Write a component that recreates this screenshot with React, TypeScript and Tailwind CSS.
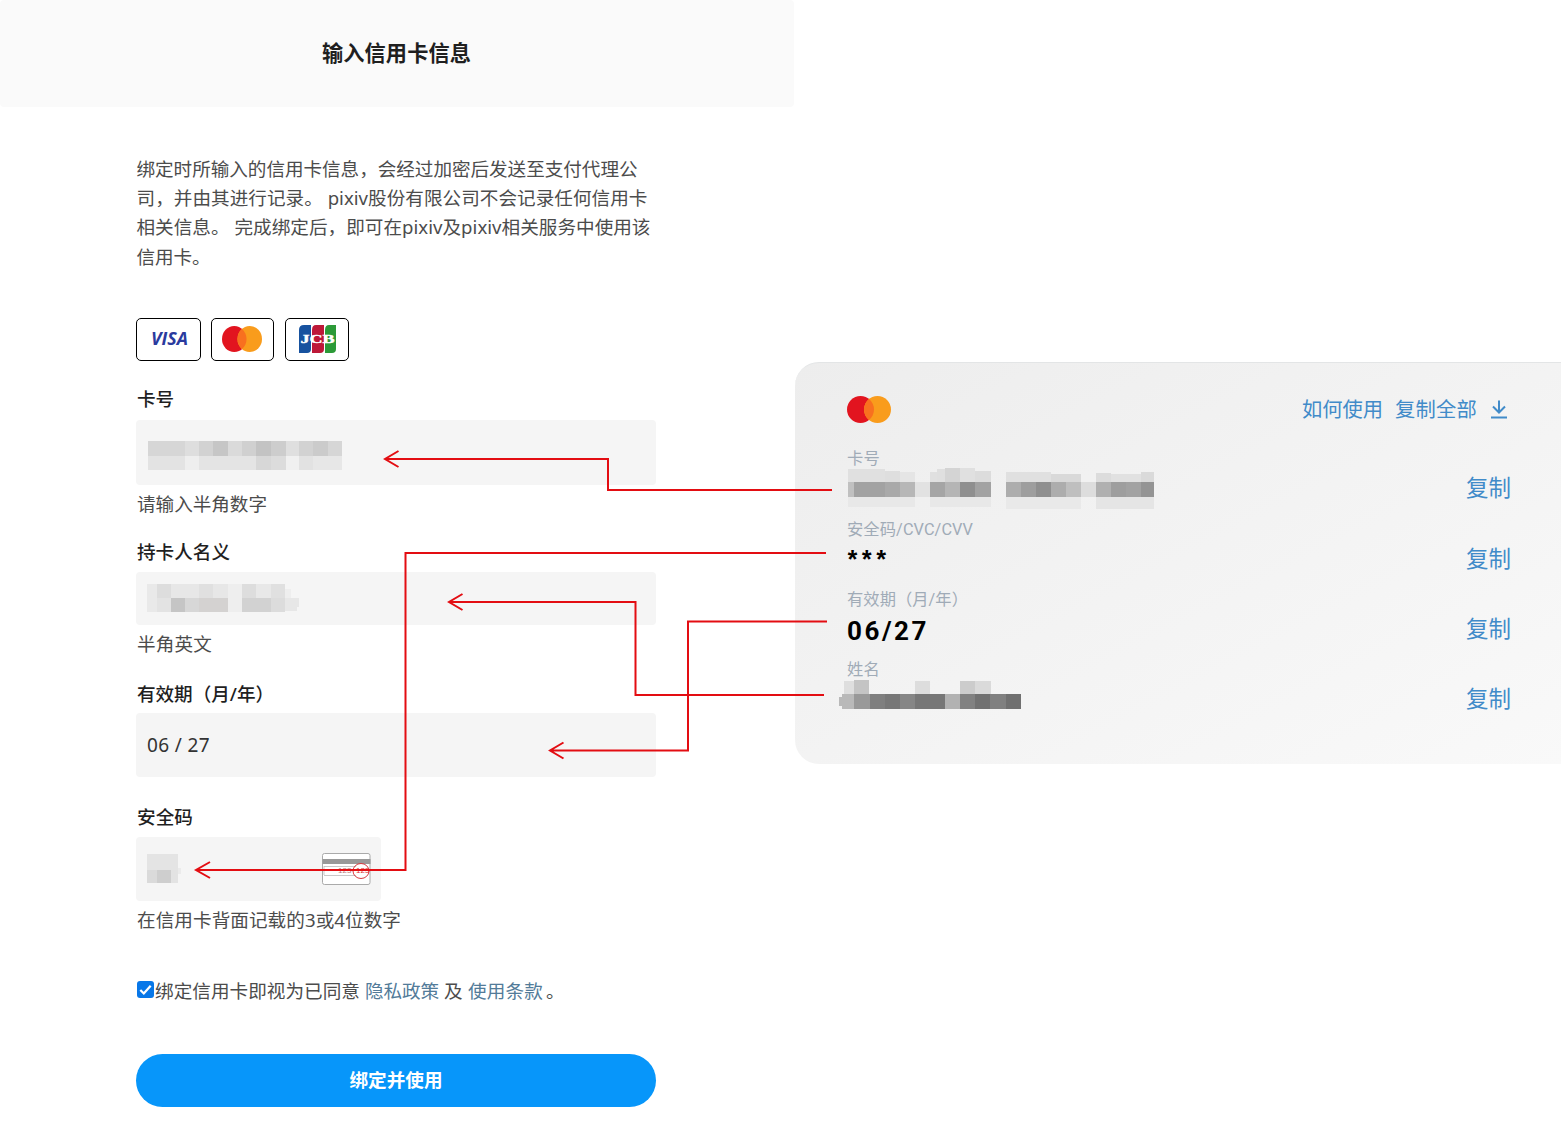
import React from "react";

const FONT = "font-['Noto_Sans','Noto_Sans_CJK_SC',sans-serif]";

function Fit({ w, size, children, className = "", weight = 400, fill, family }: {
  w: number; size: number; children: string; className?: string; weight?: number; fill?: string; family?: string;
}) {
  const ref = React.useRef<HTMLSpanElement>(null);
  const [spacing, setSpacing] = React.useState(0);
  React.useLayoutEffect(() => {
    if (!ref.current) return;
    const natural = ref.current.getBoundingClientRect().width;
    setSpacing((w - natural) / Array.from(children).length);
  }, []);
  return (
    <span ref={ref} className={`inline-block whitespace-pre ${className}`}
      style={{ fontSize: size, letterSpacing: spacing, fontWeight: weight, color: fill, fontFamily: family }}>
      {children}
    </span>
  );
}

function Mastercard({ className = "" }: { className?: string }) {
  return (
    <svg viewBox="0 0 44 27" className={className} preserveAspectRatio="none">
      <circle cx="13.5" cy="13.5" r="13.5" fill="#e2141f" />
      <circle cx="30.5" cy="13.5" r="13.5" fill="#f99c1c" />
      <path d="M22 3a13.5 13.5 0 0 1 0 21 13.5 13.5 0 0 1 0-21" fill="#f8701f" />
    </svg>
  );
}

function Visa() {
  return (
    <svg viewBox="0 0 50 30" className="h-[30px] w-[50px] overflow-visible">
      <text x="7" y="21" textLength="37" lengthAdjust="spacingAndGlyphs" fontFamily="Open Sans" fontStyle="italic" fontWeight="700" fontSize="17" fill="#2a3a9e">VISA</text>
    </svg>
  );
}

function Jcb() {
  return (
    <svg viewBox="0 0 37 29" className="h-[29px] w-[37px]">
      <path d="M5 0h7v24q0 4-4 4H0V5q0-5 5-5" fill="#17529f" />
      <path d="M17 0h8v24q0 4-4 4h-8V5q0-5 4-5" fill="#bd1838" />
      <path d="M30 0h7v24q0 4-4 4h-7V5q0-5 4-5" fill="#2c9a38" />
      <text x="1.500" y="18" textLength="34" lengthAdjust="spacingAndGlyphs" fontFamily="Liberation Serif" fontWeight="700" fontSize="12" fill="#fff" stroke="#fff" strokeWidth=".4">JCB</text>
    </svg>
  );
}

type Cell = [number, number, number, number, string];
function Mosaic({ w, h, cells, className = "" }: { w: number; h: number; cells: Cell[]; className?: string }) {
  return (
    <svg width={w} height={h} className={`block shrink-0 ${className}`} shapeRendering="crispEdges">
      {cells.map(([x, y, cw, ch, c], i) => <rect key={i} x={x} y={y} width={cw} height={ch} fill={c} />)}
    </svg>
  );
}

const numberCells: Cell[] = [
  [0, 0, 37, 15, "#d6d6d6"], [37, 0, 14, 15, "#dedede"], [51, 0, 14, 15, "#d2d2d2"], [65, 0, 15, 15, "#c6c6c6"],
  [80, 0, 14, 15, "#dadada"], [94, 0, 14, 15, "#d0d0d0"], [108, 0, 15, 15, "#c3c3c3"], [123, 0, 15, 15, "#cdcdcd"],
  [138, 0, 13, 15, "#dfdfdf"], [151, 0, 14, 15, "#d2d2d2"], [165, 0, 15, 15, "#cbcbcb"], [180, 0, 14, 15, "#d6d6d6"],
  [0, 15, 37, 14, "#e3e3e3"], [37, 15, 14, 14, "#eeeeee"], [51, 15, 57, 14, "#e4e4e4"], [108, 15, 15, 14, "#d7d7d7"],
  [123, 15, 15, 14, "#dcdcdc"], [138, 15, 13, 14, "#f0f0f0"], [151, 15, 14, 14, "#e2e2e2"], [165, 15, 29, 14, "#e7e7e7"],
];
const holderCells: Cell[] = [
  [0, 0, 10, 28, "#e9e9e9"], [10, 0, 14, 14, "#dddddd"], [24, 0, 28, 14, "#e7e7e7"], [52, 0, 14, 14, "#e0e0e0"],
  [66, 0, 15, 14, "#e7e7e7"], [81, 0, 14, 14, "#eeeeee"], [95, 0, 14, 14, "#dddddd"], [109, 0, 15, 14, "#e8e8e8"],
  [124, 0, 14, 14, "#e0e0e0"], [10, 14, 14, 14, "#e3e3e3"], [24, 14, 14, 14, "#c5c5c5"], [38, 14, 14, 14, "#d7d7d7"],
  [52, 14, 29, 14, "#d4d2d1"], [81, 14, 14, 14, "#eeeeee"], [95, 14, 29, 14, "#d2d2d2"], [124, 14, 14, 14, "#dcdcdc"],
  [138, 14, 12, 13, "#e7e7e7"], [150, 14, 2, 9, "#e7e7e7"], [138, 5, 6, 9, "#eeeeee"],
];
const codeCells: Cell[] = [
  [0, 0, 31, 16, "#e4e4e4"], [0, 16, 10, 13, "#dadada"], [10, 16, 14, 13, "#cecece"], [24, 16, 7, 13, "#e3e3e3"],
  [31, 14, 3, 6, "#ebebeb"],
];
const panelNumberCells: Cell[] = [
  [0, 1, 37, 13, "#e0e0e0"], [37, 3, 15, 11, "#dedede"], [52, 4, 15, 10, "#e5e5e5"],
  [82, 4, 15, 10, "#e0e0e0"], [89, 1, 8, 13, "#dfdfdf"], [97, 0, 15, 14, "#d4d4d4"], [112, 0, 15, 14, "#e0e0e0"], [127, 3, 16, 11, "#dcdcdc"],
  [158, 4, 45, 10, "#e0e0e0"], [203, 6, 30, 8, "#d9d9d9"], [248, 5, 15, 9, "#dcdcdc"], [263, 6, 30, 8, "#e1e1e1"], [293, 4, 13, 10, "#dadada"],
  [0, 14, 6, 15, "#c0c0c0"], [6, 14, 31, 15, "#a2a2a2"], [37, 14, 15, 15, "#a9a9a9"], [52, 14, 15, 15, "#b7b7b7"], [67, 14, 15, 15, "#e2e2e2"],
  [82, 14, 15, 15, "#a5a5a5"], [97, 14, 15, 15, "#b5b5b5"], [112, 14, 15, 15, "#8f8f8f"], [127, 14, 16, 15, "#a2a2a2"],
  [158, 14, 15, 15, "#adadad"], [173, 14, 15, 15, "#9e9e9e"], [188, 14, 15, 15, "#8f8f8f"], [203, 14, 15, 15, "#adadad"],
  [218, 14, 15, 15, "#bfbfbf"], [233, 14, 15, 15, "#dddddd"], [248, 14, 15, 15, "#b0b0b0"], [263, 14, 15, 15, "#9e9e9e"],
  [278, 14, 15, 15, "#a2a2a2"], [293, 14, 13, 15, "#949494"],
  [0, 29, 67, 10, "#e8e8e8"], [82, 29, 61, 10, "#e8e8e8"], [158, 29, 75, 12, "#e9e9e9"], [248, 29, 58, 12, "#e5e5e5"],
];
const panelNameCells: Cell[] = [
  [5, 2, 10, 14, "#dedede"], [15, 1, 15, 15, "#c4c4c4"], [76, 2, 15, 14, "#dddddd"], [121, 2, 15, 14, "#cccccc"], [136, 2, 16, 14, "#dadada"],
  [0, 18, 5, 9, "#b9b9b9"], [3, 15, 12, 15, "#b9b9b9"], [15, 15, 16, 15, "#999999"], [31, 15, 15, 15, "#7f7f7f"], [46, 15, 15, 15, "#777777"],
  [61, 15, 15, 15, "#868686"], [76, 15, 30, 15, "#777777"], [106, 15, 15, 15, "#b2b2b2"], [121, 15, 15, 15, "#818181"],
  [136, 15, 15, 15, "#717171"], [151, 15, 16, 15, "#808080"], [167, 15, 15, 15, "#707070"],
];

function Label({ children, w, className }: { children: string; w: number; className: string }) {
  return <div className={`flex items-center pl-px text-[#1f1f1f] ${className}`}><Fit w={w} size={18.6} weight={500}>{children}</Fit></div>;
}
function Helper({ children, w }: { children: string; w: number }) {
  return <div className="flex h-[37px] mb-px items-center pl-px text-[#4c4c4c]"><Fit w={w} size={18.6}>{children}</Fit></div>;
}

function CardBack() {
  return (
    <svg viewBox="0 0 50 34" className="h-[34px] w-[50px]" fill="none">
      <rect x="1.500" y="1.500" width="47.5" height="31" rx="2" fill="#fff" stroke="#aaa" />
      <rect x="1.500" y="7" width="48" height="5" fill="#999" />
      <path d="M3 14.500h32M3 23.500h32M3 14v9" stroke="#bbb" strokeWidth=".8" />
      <text x="17" y="20.500" fontSize="8" fontFamily="Liberation Sans" fill="#b77">123</text>
      <text x="35" y="20.500" fontSize="8" fontFamily="Liberation Sans" fill="#d33">123</text>
      <ellipse cx="40" cy="19" rx="8" ry="7.5" stroke="#d9393f" />
    </svg>
  );
}

function Arrows() {
  return (
    <svg className="pointer-events-none absolute left-0 top-0" width="1561" height="1126" fill="none" stroke="#e30d12" strokeWidth="2">
      <path d="M832 490H608V459H385M398.500 451L385 459L398.500 467" />
      <path d="M826 553H405.500V870H196M210 862L196 870L210 878" />
      <path d="M824 695H635.500V602H449M462.500 594L449 602L462.500 610" />
      <path d="M827 621.500H688V750.500H550M563.500 742.500L550 750.500L563.500 758.500" />
    </svg>
  );
}

function PanelRow({ label, w, children, className }: { label: string; w: number; children?: React.ReactNode; className: string }) {
  return (
    <div className={`flex justify-between ${className}`}>
      <div className="flex flex-col">
        <div className="flex h-6 items-center text-[#a0abb7]"><Fit w={w} size={16.3} family="Roboto, 'Noto Sans CJK SC', sans-serif">{label}</Fit></div>
        {children}
      </div>
      <button className="mt-[27px] flex h-7 items-center text-[#418bc9]"><Fit w={45} size={22.5}>复制</Fit></button>
    </div>
  );
}

const intro: [string, number][] = [
  ["绑定时所输入的信用卡信息，会经过加密后发送至支付代理公", 501],
  ["司，并由其进行记录。 pixiv股份有限公司不会记录任何信用卡", 511],
  ["相关信息。 完成绑定后，即可在pixiv及pixiv相关服务中使用该", 514],
  ["信用卡。", 74],
];

export default function App() {
  return (
    <main lang="zh-CN" className={`relative flex h-[1126px] w-[1561px] overflow-hidden bg-white ${FONT}`}>
      <section className="flex w-[795px] shrink-0 flex-col">
        <header className="flex h-[107px] w-[794px] items-center justify-center rounded bg-[#fafafa] pb-0.5 pr-px text-[#1f1f1f]">
          <h1 className="flex"><Fit w={149} size={21.2} weight={700}>输入信用卡信息</Fit></h1>
        </header>
        <div className="ml-[136px] flex w-[520px] flex-col">
          <div className="mt-[47px] flex flex-col pl-[0.5px] text-[#4c4c4c]">
            {intro.map(([t, w]) => (
              <div key={t} className="flex h-[29.3px] items-center"><Fit w={w} size={18.6}>{t}</Fit></div>
            ))}
          </div>
          <div className="mt-[46.8px] flex gap-[10px]">
            <div className="flex h-[43px] w-[65px] items-center justify-center rounded-[5px] border-[1.5px] border-black"><Visa /></div>
            <div className="flex h-[43px] w-[63px] items-center justify-center rounded-[5px] border border-black"><Mastercard className="mr-px h-[26px] w-10" /></div>
            <div className="ml-px flex h-[43px] w-[64px] items-center justify-center rounded-[5px] border border-black"><Jcb /></div>
          </div>
          <Label w={37} className="mb-[3px] mt-[20px] h-9">卡号</Label>
          <div className="flex h-[65px] items-center rounded bg-[#f5f5f5] pl-3 pt-1.5"><Mosaic w={194} h={29} cells={numberCells} /></div>
          <Helper w={130}>请输入半角数字</Helper>
          <Label w={93} className="mt-[9px] h-10">持卡人名义</Label>
          <div className="flex h-[53px] items-center rounded bg-[#f5f5f5] pl-[11px]"><Mosaic w={152} h={28} cells={holderCells} /></div>
          <Helper w={75}>半角英文</Helper>
          <Label w={137} className="mt-[11px] h-[39px]">有效期（月/年）</Label>
          <div className="flex h-16 items-center rounded bg-[#f5f5f5] pl-[11px] text-[#333]"><Fit w={63} size={19}>06 / 27</Fit></div>
          <Label w={56} className="mt-5 h-10">安全码</Label>
          <div className="flex h-16 w-[245px] items-center justify-between rounded bg-[#f5f5f5] pl-[11px] pr-[10px]">
            <Mosaic w={34} h={29} cells={codeCells} /><CardBack />
          </div>
          <Helper w={264}>在信用卡背面记载的3或4位数字</Helper>
          <div className="mt-9 flex h-8 items-center text-[#4c4c4c]">
            <span className="mb-0.5 ml-px flex size-[17px] items-center justify-center rounded-[3px] bg-[#0877e8]">
              <svg viewBox="0 0 18 18" className="size-[17px]" fill="none" stroke="white" strokeWidth="2.4"><path d="M3.500 9.500l3.700 3.700L14.500 5" /></svg>
            </span>
            <Fit className="ml-px" w={205} size={18.6}>绑定信用卡即视为已同意</Fit>
            <Fit className="ml-[5px]" w={74} size={18.6} fill="#527b99">隐私政策</Fit>
            <Fit className="ml-[5px]" w={19} size={18.6}>及</Fit>
            <Fit className="ml-[5px]" w={75} size={18.6} fill="#527b99">使用条款</Fit>
            <Fit className="ml-[3px]" w={19} size={18.6}>。</Fit>
          </div>
          <button className="mt-[47px] flex h-[53px] items-center justify-center rounded-full bg-[#0796fa] pb-0.5 text-white"><Fit w={93} size={18.6} weight={700}>绑定并使用</Fit></button>
        </div>
      </section>
      <section className="mt-[362px] flex h-[402px] flex-1 flex-col rounded-l-[24px] border-t border-[#e3e5e6] bg-linear-to-br from-[#ededed] via-[#f3f3f3] to-[#f9f9f9] pl-[52px] pr-[50px]">
        <div className="mt-[32px] flex h-7 items-center justify-between text-[#418bc9]">
          <Mastercard className="h-[27px] w-[44px]" />
          <div className="flex items-center">
            <Fit w={81} size={20.3}>如何使用</Fit>
            <Fit className="ml-3" w={82} size={20.3}>复制全部</Fit>
            <svg viewBox="0 0 18 20" className="ml-[13px] mr-[3px] h-5 w-[18px]" fill="none" stroke="currentColor" strokeWidth="2"><path d="M9 1.500v11.500M3 7.500l6 6 6-6M1 18.500h16" /></svg>
          </div>
        </div>
        <PanelRow label="卡号" w={33} className="mt-[24px] h-[71px]"><Mosaic className="-mt-[3px] ml-px" w={306} h={41} cells={panelNumberCells} /></PanelRow>
        <PanelRow label="安全码/CVC/CVV" w={126} className="h-[70px]">
          <div className="-ml-0.5 flex h-[38px] items-center pt-1 text-black"><Fit w={43} size={25} weight={700} family="Liberation Mono">***</Fit></div>
        </PanelRow>
        <PanelRow label="有效期（月/年）" w={121} className="h-[70px]">
          <div className="flex h-[38px] items-center text-black"><Fit w={82} size={26} weight={700} family="Roboto">06/27</Fit></div>
        </PanelRow>
        <PanelRow label="姓名" w={33} className="h-[71px]"><Mosaic className="-ml-2 -mt-[3px]" w={182} h={30} cells={panelNameCells} /></PanelRow>
      </section>
      <Arrows />
    </main>
  );
}
